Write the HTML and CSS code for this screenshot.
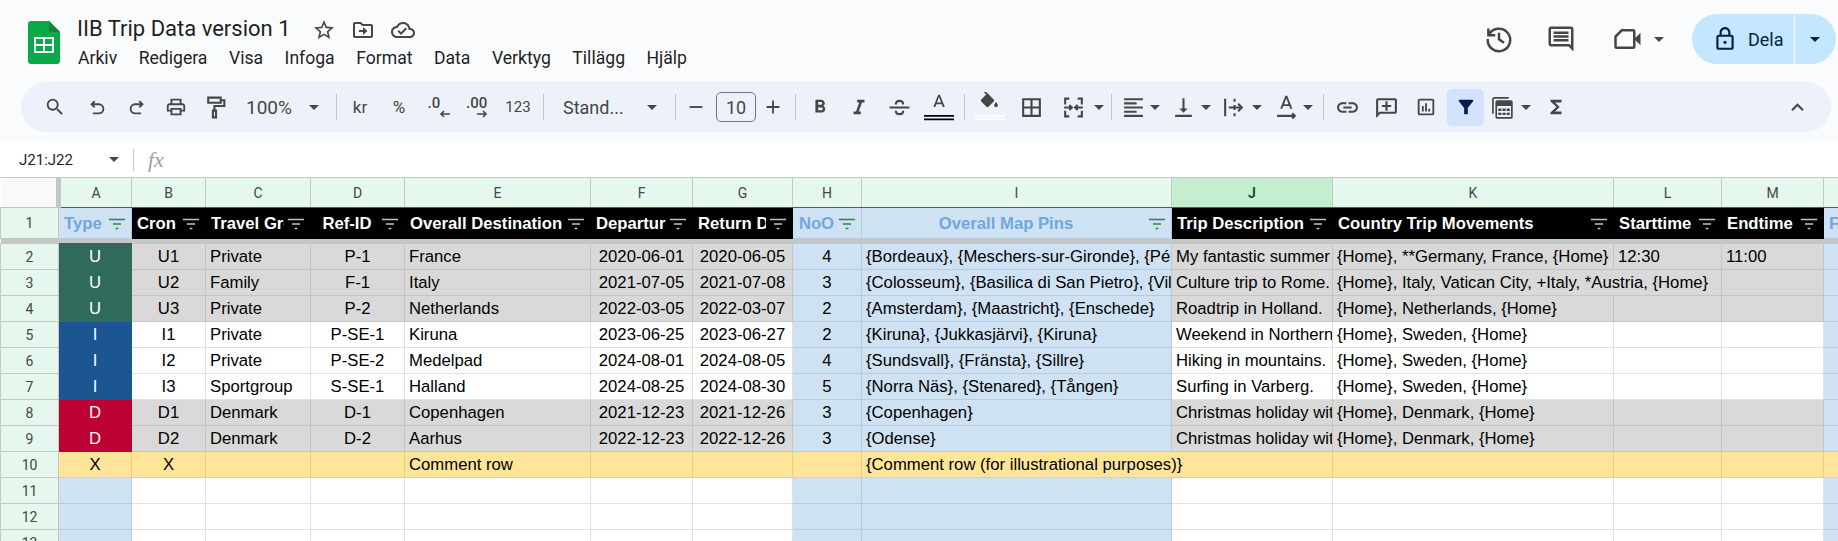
FILE: index.html
```html
<!DOCTYPE html>
<html lang="sv">
<head>
  <meta charset="UTF-8">
  <title>IIB Trip Data version 1</title>
  <link rel="stylesheet" href="styles.css">
</head>
<body>

  <header class="topbar">
    <div class="head">
      <svg class="logo" viewBox="0 0 32 43">
        <path fill="#0ba84a" d="M3 0H21L32 11V40a3 3 0 0 1-3 3H3a3 3 0 0 1-3-3V3a3 3 0 0 1 3-3z"/>
        <path fill="#188038" d="M21 0L32 11H21z"/>
        <path fill="#fff" d="M6 16h20v16H6z"/>
        <path fill="#0ba84a" d="M8 18h7v5H8zM17 18h7v5h-7zM8 25h7v5H8zM17 25h7v5h-7z"/>
      </svg>
      <div class="docinfo">
        <div class="titlerow">
          <span class="title">IIB Trip Data version 1</span>
          <svg class="ico ico-star" viewBox="0 0 24 24"><path d="M22 9.24l-7.19-.62L12 2 9.19 8.63 2 9.24l5.46 4.73L5.82 21 12 17.27 18.18 21l-1.63-7.03L22 9.24zM12 15.4l-3.76 2.27 1-4.28-3.32-2.88 4.38-.38L12 6.1l1.71 4.04 4.38.38-3.32 2.88 1 4.28L12 15.4z"/></svg>
          <svg class="ico ico-folder" viewBox="0 0 24 24"><path d="M20 6h-8l-2-2H4c-1.1 0-2 .9-2 2v12c0 1.1.9 2 2 2h16c1.1 0 2-.9 2-2V8c0-1.1-.9-2-2-2zm0 12H4V6h5.17l2 2H20v10z"/><path d="M12 17l4.5-4L12 9v3H8v2h4z"/></svg>
          <svg class="ico ico-cloud" viewBox="0 0 24 24"><path d="M19.35 10.04C18.67 6.59 15.64 4 12 4 9.11 4 6.6 5.64 5.35 8.04 2.34 8.36 0 10.91 0 14c0 3.31 2.69 6 6 6h13c2.76 0 5-2.24 5-5 0-2.64-2.05-4.78-4.65-4.96zM19 18H6c-2.21 0-4-1.79-4-4 0-2.05 1.53-3.76 3.56-3.97l1.07-.11.5-.95C8.08 7.14 9.94 6 12 6c2.62 0 4.88 1.86 5.39 4.43l.3 1.5 1.53.11c1.56.1 2.78 1.41 2.78 2.96 0 1.65-1.35 3-3 3zm-9-3.82l-2.09-2.09L6.5 13.5 10 17l6.01-6.01-1.41-1.41z"/></svg>
        </div>
        <nav class="menu">
          <span>Arkiv</span><span>Redigera</span><span>Visa</span><span>Infoga</span><span>Format</span><span>Data</span><span>Verktyg</span><span>Tillägg</span><span>Hjälp</span>
        </nav>
      </div>
      <div class="actions">
        <svg class="act-ico ico-hist" viewBox="0 0 24 24"><path class="st" d="M3.5 3.5v5.5H9M3.8 9A9 9 0 1 1 3 12M12 7v5.3l4 2.7"/></svg>
        <svg class="act-ico ico-chat" viewBox="0 0 24 24"><path d="M21.99 4c0-1.1-.89-2-1.99-2H4c-1.1 0-2 .9-2 2v12c0 1.1.9 2 2 2h14l4 4-.01-18zM20 4v13.17L18.83 16H4V4h16zM6 12h12v2H6zm0-3h12v2H6zm0-3h12v2H6z"/></svg>
        <svg class="act-ico ico-video" viewBox="0 0 24 24"><path class="st" d="M7 5H16a1 1 0 0 1 1 1v12a1 1 0 0 1-1 1H3a1 1 0 0 1-1-1V10z"/><path d="M17 12l5-5v10z"/></svg>
        <i class="caret caret-video"></i>
        <div class="share">
          <div class="share-main">
            <svg class="ico-lock" viewBox="0 0 24 24"><path d="M18 8h-1V6c0-2.760-2.240-5-5-5S7 3.240 7 6v2H6c-1.100 0-2 .9-2 2v10c0 1.100.9 2 2 2h12c1.100 0 2-.9 2-2V10c0-1.100-.9-2-2-2zM9 6c0-1.660 1.340-3 3-3s3 1.340 3 3v2H9V6zm9 14H6V10h12v10z"/><circle cx="12" cy="15" r="1.500"/></svg>
            <span>Dela</span>
          </div>
          <div class="share-drop"><i class="caret caret-dark"></i></div>
        </div>
      </div>
    </div>

    <div class="toolbar">
      <div class="t w40"><svg class="i22" viewBox="0 0 24 24"><path d="M15.500 14h-.79l-.28-.27A6.471 6.471 0 0 0 16 9.500 6.500 6.500 0 1 0 9.500 16c1.610 0 3.090-.59 4.230-1.570l.27.28v.79l5 4.990L20.490 19l-4.990-5zm-6 0C7.010 14 5 11.990 5 9.500S7.010 5 9.500 5 14 7.010 14 9.500 11.990 14 9.500 14z"/></svg></div>
      <div class="t w40 ml2"><svg class="i22" viewBox="0 0 24 24"><path class="st" d="M9.500 5.500L6 9l3.500 3.500M6 9h8a5 5 0 0 1 0 10H7.500"/></svg></div>
      <div class="t w40"><svg class="i22" viewBox="0 0 24 24"><path class="st" d="M14.500 5.500L18 9l-3.500 3.500M18 9h-8a5 5 0 0 0 0 10h6.500"/></svg></div>
      <div class="t w38"><svg class="i22" viewBox="0 0 24 24"><path d="M19 8h-1V3H6v5H5c-1.660 0-3 1.340-3 3v6h4v4h12v-4h4v-6c0-1.660-1.340-3-3-3zM8 5h8v3H8V5zm8 12v2H8v-4h8v2zm2-2v-2H6v2H4v-4c0-.55.45-1 1-1h14c.55 0 1 .45 1 1v4h-2z"/></svg></div>
      <div class="t w40"><svg class="i24" viewBox="0 0 24 24"><path class="st" d="M5 2.500h12v5H5zM17 5h3.500v5.500H11V15M9.500 15h3v6.500h-3z"/></svg></div>
      <div class="t w96 tsel"><span class="zoomval">100%</span><i class="caret"></i></div>
      <div class="sep"></div>
      <div class="t w36 ttxt">kr</div>
      <div class="t w42 ttxt">%</div>
      <div class="t w36"><svg class="i30" viewBox="0 0 30 30"><text class="dec" x="4.500" y="16">.0</text><path class="st thin" d="M27 22H18M21 19l-3 3 3 3"/></svg></div>
      <div class="t w42"><svg class="i30" viewBox="0 0 30 30"><text class="dec" x="4" y="16">.00</text><path class="st thin" d="M15 22h9M21 19l3 3-3 3"/></svg></div>
      <div class="t w40 ttxt small">123</div>
      <div class="sep"></div>
      <div class="t w121 tsel tfont"><span class="fontname">Stand...</span><i class="caret"></i></div>
      <div class="sep"></div>
      <div class="t w29"><svg class="i22" viewBox="0 0 24 24"><path d="M5 11h14v2H5z"/></svg></div>
      <div class="t w40 ml6"><span class="sizebox">10</span></div>
      <div class="t w34"><svg class="i22" viewBox="0 0 24 24"><path d="M19 13h-6v6h-2v-6H5v-2h6V5h2v6h6z"/></svg></div>
      <div class="sep"></div>
      <div class="t w38"><svg class="i22" viewBox="0 0 24 24"><path d="M15.600 10.790c.97-.67 1.650-1.770 1.650-2.790 0-2.260-1.750-4-4-4H7v14h7.040c2.090 0 3.710-1.700 3.710-3.790 0-1.520-.86-2.820-2.150-3.420zM10 6.500h3c.83 0 1.500.67 1.500 1.500s-.67 1.500-1.500 1.500h-3v-3zm3.500 9H10v-3h3.500c.83 0 1.500.67 1.500 1.500s-.67 1.500-1.500 1.500z"/></svg></div>
      <div class="t w40"><svg class="i22" viewBox="0 0 24 24"><path d="M10 4v3h2.210l-3.420 10H6v3h8v-3h-2.210l3.420-10H18V4z"/></svg></div>
      <div class="t w40"><svg class="i24" viewBox="0 0 24 24"><path class="st" d="M2.500 12h19M8.500 9c0-4.500 7-4.500 7 0M8.500 15c0 4.500 7 4.500 7 0"/></svg></div>
      <div class="t w40"><svg class="i30 wide" viewBox="0 0 30 30"><path transform="translate(4.500 0) scale(.88)" d="M11 3 5.500 17h2.250l1.120-3h6.250l1.120 3h2.250L13 3h-2zm-1.380 9L12 5.670 14.380 12H9.620z"/><path fill="#000" d="M0 23h30v1.700H0zM0 26.500h30v1.700H0z"/></svg></div>
      <div class="sep"></div>
      <div class="t w40"><svg class="i30 wide" viewBox="0 0 30 30"><path transform="translate(3 -1) scale(.95)" d="M16.560 8.940 7.620 0 6.210 1.410l2.380 2.380-5.150 5.150c-.59.59-.59 1.540 0 2.120l5.500 5.500c.29.29.68.44 1.060.44s.77-.15 1.060-.44l5.500-5.500c.59-.58.59-1.530 0-2.120zM19 11.500s-2 2.170-2 3.500c0 1.100.9 2 2 2s2-.9 2-2c0-1.330-2-3.500-2-3.500z"/><path fill="#fff" d="M0 23h30v1.700H0zM0 26.500h30v1.700H0z"/></svg></div>
      <div class="t w42"><svg class="i24" viewBox="0 0 24 24"><path d="M3 3v18h18V3H3zm8 16H5v-6h6v6zm0-8H5V5h6v6zm8 8h-6v-6h6v6zm0-8h-6V5h6v6z"/></svg></div>
      <div class="t w42"><svg class="i24" viewBox="0 0 24 24"><path class="st" d="M8 3.500H4v5.500M4 11v2M4 15v5.500h4M16 3.500h4v5.500M20 11v2M20 15v5.500h-4M4 12h6M8 9.500l2.500 2.500L8 14.500M20 12h-6M16 9.500L13.500 12l2.500 2.500"/></svg></div>
      <i class="caret"></i>
      <div class="sep ml2"></div>
      <div class="t w33"><svg class="i24" viewBox="0 0 24 24"><path d="M15 15H3v2h12v-2zm0-8H3v2h12V7zM3 13h18v-2H3v2zm0 8h18v-2H3v2zM3 3v2h18V3H3z"/></svg></div>
      <i class="caret"></i>
      <div class="t w35 ml6"><svg class="i24" viewBox="0 0 24 24"><path d="M16 13h-3V3h-2v10H8l4 4 4-4zM4 19v2h16v-2H4z"/></svg></div>
      <i class="caret"></i>
      <div class="t w37 ml4"><svg class="i24" viewBox="0 0 24 24"><path class="st" d="M4 3.500v17M13 3.500v3M13 9.500v5M13 17.500v3M7.500 12H20M16.500 8.500L20 12l-3.500 3.500"/></svg></div>
      <i class="caret"></i>
      <div class="t w34 ml7"><svg class="i24" viewBox="0 0 24 24"><path transform="translate(1 -2) scale(.9)" d="M11 3 5.500 17h2.250l1.120-3h6.250l1.120 3h2.250L13 3h-2zm-1.380 9L12 5.670 14.380 12H9.620z"/><path class="st" d="M3 20h17M17.500 17.500L20 20l-2.500 2.500"/></svg></div>
      <i class="caret"></i>
      <div class="sep ml5"></div>
      <div class="t w36"><svg class="i24" viewBox="0 0 24 24"><path d="M3.900 12c0-1.710 1.390-3.100 3.100-3.100h4V7H7c-2.760 0-5 2.240-5 5s2.240 5 5 5h4v-1.900H7c-1.710 0-3.100-1.390-3.100-3.100zM8 13h8v-2H8v2zm9-6h-4v1.900h4c1.710 0 3.100 1.390 3.100 3.100s-1.390 3.100-3.100 3.100h-4V17h4c2.760 0 5-2.240 5-5s-2.240-5-5-5z"/></svg></div>
      <div class="t w43"><svg class="i24" viewBox="0 0 24 24"><path d="M20 3H4c-1.100 0-2 .9-2 2v17l4-4h14c1.100 0 2-.9 2-2V5c0-1.100-.9-2-2-2zm0 13H5.200L4 17.200V5h16v11z"/><path d="M13 6h-2v3.500H7.500v2H11V15h2v-3.500h3.500v-2H13z"/></svg></div>
      <div class="t w36"><svg class="i22" viewBox="0 0 24 24"><path d="M19 3H5c-1.100 0-2 .9-2 2v14c0 1.100.9 2 2 2h14c1.100 0 2-.9 2-2V5c0-1.100-.9-2-2-2zm0 16H5V5h14v14z"/><path d="M7.500 11h2v6h-2zM11 8h2v9h-2zM14.500 14h2v3h-2z"/></svg></div>
      <div class="t w37 ml3 t-on"><svg class="i22" viewBox="0 0 24 24"><path d="M4.250 5.610C6.270 8.200 10 13 10 13v6c0 .55.45 1 1 1h2c.55 0 1-.45 1-1v-6s3.720-4.800 5.740-7.390A.998.998 0 0 0 18.950 4H5.040c-.83 0-1.300.95-.79 1.610z"/></svg></div>
      <div class="t w37"><svg class="i24" viewBox="0 0 24 24"><path class="st thin" d="M18 2.800H4.500a1.700 1.700 0 0 0-1.700 1.700V18"/><path class="st thin" d="M7 5.800h13a1 1 0 0 1 1 1V21a1 1 0 0 1-1 1H7a1 1 0 0 1-1-1V6.800a1 1 0 0 1 1-1z"/><path d="M6.500 6.500h14v4h-14zM8 13h3v2.300H8zM12 13h3v2.300h-3zM16 13h3v2.300h-3zM8 17h3v2.300H8zM12 17h3v2.300h-3zM16 17h3v2.300h-3z"/></svg></div>
      <i class="caret"></i>
      <div class="t w50"><svg class="i22" viewBox="0 0 24 24"><path d="M18 4H6v2l6.500 6L6 18v2h12v-3h-7l5-5-5-5h7z"/></svg></div>
      <div class="t w40 tright"><svg class="i24" viewBox="0 0 24 24"><path d="M7.410 15.410 12 10.830l4.590 4.580L18 14l-6-6-6 6z"/></svg></div>
    </div>
  </header>

  <div class="formula">
    <span class="namebox">J21:J22</span>
    <i class="caret"></i>
    <div class="fsep"></div>
    <span class="fx">fx</span>
  </div>

  <div class="sheet">
    <table>
      <colgroup>
        <col class="c-rh"><col class="c-a"><col class="c-b"><col class="c-c"><col class="c-d"><col class="c-e"><col class="c-f"><col class="c-g"><col class="c-h"><col class="c-i"><col class="c-j"><col class="c-k"><col class="c-l"><col class="c-m"><col class="c-n">
      </colgroup>
      <thead>
        <tr class="letters">
          <th class="corner"></th><th>A</th><th>B</th><th>C</th><th>D</th><th>E</th><th>F</th><th>G</th><th>H</th><th>I</th><th class="active">J</th><th>K</th><th>L</th><th>M</th><th></th>
        </tr>
      </thead>
      <tbody>
        <tr class="hrow">
          <td class="rh">1</td>
          <td class="hblue"><div class="hc"><span class="hl">Type</span><svg class="fl" viewBox="0 0 20 20"><path d="M1 5h18M5.500 10h9M8.500 15h3"/></svg></div></td>
          <td><div class="hc"><span class="hl">Cron</span><svg class="fl" viewBox="0 0 20 20"><path d="M1 5h18M5.500 10h9M8.500 15h3"/></svg></div></td>
          <td><div class="hc"><span class="hl">Travel Group</span><svg class="fl" viewBox="0 0 20 20"><path d="M1 5h18M5.500 10h9M8.500 15h3"/></svg></div></td>
          <td><div class="hc"><span class="hl mid">Ref-ID</span><svg class="fl" viewBox="0 0 20 20"><path d="M1 5h18M5.500 10h9M8.500 15h3"/></svg></div></td>
          <td><div class="hc"><span class="hl">Overall Destination</span><svg class="fl" viewBox="0 0 20 20"><path d="M1 5h18M5.500 10h9M8.500 15h3"/></svg></div></td>
          <td><div class="hc"><span class="hl">Departure Date</span><svg class="fl" viewBox="0 0 20 20"><path d="M1 5h18M5.500 10h9M8.500 15h3"/></svg></div></td>
          <td><div class="hc"><span class="hl">Return Date</span><svg class="fl" viewBox="0 0 20 20"><path d="M1 5h18M5.500 10h9M8.500 15h3"/></svg></div></td>
          <td class="hblue"><div class="hc"><span class="hl mid">NoO</span><svg class="fl" viewBox="0 0 20 20"><path d="M1 5h18M5.500 10h9M8.500 15h3"/></svg></div></td>
          <td class="hblue"><div class="hc"><span class="hl mid">Overall Map Pins</span><svg class="fl" viewBox="0 0 20 20"><path d="M1 5h18M5.500 10h9M8.500 15h3"/></svg></div></td>
          <td><div class="hc"><span class="hl">Trip Description</span><svg class="fl" viewBox="0 0 20 20"><path d="M1 5h18M5.500 10h9M8.500 15h3"/></svg></div></td>
          <td><div class="hc"><span class="hl">Country Trip Movements</span><svg class="fl" viewBox="0 0 20 20"><path d="M1 5h18M5.500 10h9M8.500 15h3"/></svg></div></td>
          <td><div class="hc"><span class="hl">Starttime</span><svg class="fl" viewBox="0 0 20 20"><path d="M1 5h18M5.500 10h9M8.500 15h3"/></svg></div></td>
          <td><div class="hc"><span class="hl">Endtime</span><svg class="fl" viewBox="0 0 20 20"><path d="M1 5h18M5.500 10h9M8.500 15h3"/></svg></div></td>
          <td class="hblue"><div class="hc"><span class="hl">Flights</span></div></td>
        </tr>
        <tr class="freeze"><td colspan="15"></td></tr>
        <tr class="gray">
          <td class="rh">2</td><td class="ctr tu">U</td><td class="ctr">U1</td><td>Private</td><td class="ctr">P-1</td><td>France</td><td class="ctr">2020-06-01</td><td class="ctr">2020-06-05</td><td class="ctr blue">4</td><td class="blue">{Bordeaux}, {Meschers-sur-Gironde}, {Périgueux}</td><td>My fantastic summer vacation.</td><td>{Home}, **Germany, France, {Home}</td><td>12:30</td><td>11:00</td><td class="blue"></td>
        </tr>
        <tr class="gray">
          <td class="rh">3</td><td class="ctr tu">U</td><td class="ctr">U2</td><td>Family</td><td class="ctr">F-1</td><td>Italy</td><td class="ctr">2021-07-05</td><td class="ctr">2021-07-08</td><td class="ctr blue">3</td><td class="blue">{Colosseum}, {Basilica di San Pietro}, {Villa Borghese}</td><td>Culture trip to Rome.</td><td colspan="2">{Home}, Italy, Vatican City, +Italy, *Austria, {Home}</td><td></td><td class="blue"></td>
        </tr>
        <tr class="gray">
          <td class="rh">4</td><td class="ctr tu">U</td><td class="ctr">U3</td><td>Private</td><td class="ctr">P-2</td><td>Netherlands</td><td class="ctr">2022-03-05</td><td class="ctr">2022-03-07</td><td class="ctr blue">2</td><td class="blue">{Amsterdam}, {Maastricht}, {Enschede}</td><td>Roadtrip in Holland.</td><td>{Home}, Netherlands, {Home}</td><td></td><td></td><td class="blue"></td>
        </tr>
        <tr>
          <td class="rh">5</td><td class="ctr ti">I</td><td class="ctr">I1</td><td>Private</td><td class="ctr">P-SE-1</td><td>Kiruna</td><td class="ctr">2023-06-25</td><td class="ctr">2023-06-27</td><td class="ctr blue">2</td><td class="blue">{Kiruna}, {Jukkasjärvi}, {Kiruna}</td><td>Weekend in Northern Sweden.</td><td>{Home}, Sweden, {Home}</td><td></td><td></td><td class="blue"></td>
        </tr>
        <tr>
          <td class="rh">6</td><td class="ctr ti">I</td><td class="ctr">I2</td><td>Private</td><td class="ctr">P-SE-2</td><td>Medelpad</td><td class="ctr">2024-08-01</td><td class="ctr">2024-08-05</td><td class="ctr blue">4</td><td class="blue">{Sundsvall}, {Fränsta}, {Sillre}</td><td>Hiking in mountains.</td><td>{Home}, Sweden, {Home}</td><td></td><td></td><td class="blue"></td>
        </tr>
        <tr>
          <td class="rh">7</td><td class="ctr ti">I</td><td class="ctr">I3</td><td>Sportgroup</td><td class="ctr">S-SE-1</td><td>Halland</td><td class="ctr">2024-08-25</td><td class="ctr">2024-08-30</td><td class="ctr blue">5</td><td class="blue">{Norra Näs}, {Stenared}, {Tången}</td><td>Surfing in Varberg.</td><td>{Home}, Sweden, {Home}</td><td></td><td></td><td class="blue"></td>
        </tr>
        <tr class="gray">
          <td class="rh">8</td><td class="ctr td-type">D</td><td class="ctr">D1</td><td>Denmark</td><td class="ctr">D-1</td><td>Copenhagen</td><td class="ctr">2021-12-23</td><td class="ctr">2021-12-26</td><td class="ctr blue">3</td><td class="blue">{Copenhagen}</td><td>Christmas holiday with family.</td><td>{Home}, Denmark, {Home}</td><td></td><td></td><td class="blue"></td>
        </tr>
        <tr class="gray">
          <td class="rh">9</td><td class="ctr td-type">D</td><td class="ctr">D2</td><td>Denmark</td><td class="ctr">D-2</td><td>Aarhus</td><td class="ctr">2022-12-23</td><td class="ctr">2022-12-26</td><td class="ctr blue">3</td><td class="blue">{Odense}</td><td>Christmas holiday with family.</td><td>{Home}, Denmark, {Home}</td><td></td><td></td><td class="blue"></td>
        </tr>
        <tr class="yel">
          <td class="rh">10</td><td class="ctr">X</td><td class="ctr">X</td><td></td><td></td><td>Comment row</td><td></td><td></td><td></td><td colspan="2">{Comment row (for illustrational purposes)}</td><td></td><td></td><td></td><td></td>
        </tr>
        <tr><td class="rh">11</td><td class="blue"></td><td></td><td></td><td></td><td></td><td></td><td></td><td class="blue"></td><td class="blue"></td><td></td><td></td><td></td><td></td><td class="blue"></td></tr>
        <tr><td class="rh">12</td><td class="blue"></td><td></td><td></td><td></td><td></td><td></td><td></td><td class="blue"></td><td class="blue"></td><td></td><td></td><td></td><td></td><td class="blue"></td></tr>
        <tr><td class="rh">13</td><td class="blue"></td><td></td><td></td><td></td><td></td><td></td><td></td><td class="blue"></td><td class="blue"></td><td></td><td></td><td></td><td></td><td class="blue"></td></tr>
      </tbody>
    </table>
  </div>

</body>
</html>
```

FILE: styles.css
```css
html, body {
  margin: 0;
  height: 100%;
  overflow: hidden;
}

body {
  display: flex;
  flex-direction: column;
  background-color: #fff;
  font-family: Roboto, "Liberation Sans", sans-serif;
  color: #1f1f1f;
}

svg {
  fill: #444746;
  flex: none;
}

.st {
  fill: none;
  stroke: #444746;
  stroke-width: 2;
}

.st.thin {
  stroke-width: 1.6;
}

.caret {
  display: block;
  flex: none;
  width: 0;
  height: 0;
  border-left: 5px solid transparent;
  border-right: 5px solid transparent;
  border-top: 5px solid #444746;
}

/* top area */
.topbar {
  flex: none;
  height: 142px;
  background-color: #f9fbfd;
}

.head {
  display: flex;
  height: 82px;
  padding-left: 28px;
  box-sizing: border-box;
}

.logo {
  width: 32px;
  height: 43px;
  margin-top: 21px;
}

.docinfo {
  margin-left: 17px;
  padding-top: 14px;
}

.titlerow {
  display: flex;
  align-items: center;
  height: 28px;
}

.title {
  font-size: 22px;
  white-space: nowrap;
  width: 212px;
}

.ico {
  width: 24px;
  height: 24px;
  margin-top: 3px;
}

.ico-star { margin-left: 23px; }
.ico-folder { margin-left: 15px; }
.ico-cloud { margin-left: 16px; }

.menu {
  display: flex;
  gap: 21.500px;
  height: 28px;
  margin-top: 2px;
  padding-left: 1px;
  align-items: center;
  font-size: 17.600px;
  color: #1f1f1f;
}

.actions {
  display: flex;
  align-items: center;
  margin-left: auto;
  height: 50px;
  margin-top: 14px;
  padding-right: 2px;
}

.act-ico {
  width: 30px;
  height: 30px;
}

.ico-hist { margin-right: 32px; }
.ico-chat { margin-right: 37px; }
.caret-video { margin-left: 11.500px; margin-right: 28px; }

.share {
  display: flex;
  width: 144px;
  height: 50px;
  border-radius: 25px;
  overflow: hidden;
  background-color: #c2e7ff;
  color: #041e49;
}

.share-main {
  display: flex;
  align-items: center;
  width: 103px;
  padding-left: 20px;
  box-sizing: border-box;
  border-right: 1px solid #fff;
  font-size: 18px;
  gap: 10px;
}

.ico-lock {
  width: 26px;
  height: 26px;
  fill: #041e49;
}

.share-drop {
  display: flex;
  flex: 1;
  align-items: center;
  justify-content: center;
  padding-right: 2px;
}

.caret-dark {
  border-top-color: #041e49;
}

/* toolbar */
.toolbar {
  display: flex;
  align-items: center;
  height: 50px;
  margin: 0 7px 0 21px;
  padding: 0 14px;
  border-radius: 25px;
  background-color: #edf2fa;
  color: #444746;
}

.t {
  display: flex;
  flex: none;
  align-items: center;
  justify-content: center;
  height: 37px;
}

.w29 { width: 29px; }
.w33 { width: 33px; }
.w34 { width: 34px; }
.w35 { width: 35px; }
.w36 { width: 36px; }
.w37 { width: 37px; }
.w38 { width: 38px; }
.w40 { width: 40px; }
.w42 { width: 42px; }
.w43 { width: 43px; }
.w50 { width: 50px; }
.w96 { width: 96px; }
.w121 { width: 121px; }

.ml2 { margin-left: 2px; }
.ml3 { margin-left: 3px; }
.ml4 { margin-left: 4px; }
.ml5 { margin-left: 5px; }
.ml6 { margin-left: 6px; }
.ml7 { margin-left: 7px; }

.i22 { width: 22px; height: 22px; }
.i24 { width: 25px; height: 25px; }
.i30 { width: 30px; height: 30px; }

.sep {
  flex: none;
  width: 1px;
  height: 26px;
  margin-right: 5px;
  margin-left: 5px;
  background-color: #c7c7c7;
}

.sep.ml2 { margin-left: 7px; }
.sep.ml5 { margin-left: 10px; }

.tsel {
  justify-content: space-between;
  box-sizing: border-box;
  font-size: 18px;
}

.w96.tsel { padding: 0 12px 0 11px; font-size: 19px; }
.tfont { padding: 0 13px 0 14px; }

.ttxt {
  font-size: 17px;
}

.ttxt.small {
  font-size: 15px;
}

.dec {
  font-family: Roboto, sans-serif;
  font-size: 15px;
  font-weight: 500;
  fill: #444746;
}

.sizebox {
  display: block;
  width: 40px;
  height: 30px;
  line-height: 30px;
  border: 1px solid #747775;
  border-radius: 5px;
  box-sizing: border-box;
  text-align: center;
  font-size: 18px;
}

.t-on {
  height: 37px;
  border-radius: 5px;
  background-color: #d3e3fd;
}

.t-on svg {
  fill: #041e49;
}

.tright {
  margin-left: auto;
}

/* formula bar */
.formula {
  display: flex;
  flex: none;
  align-items: center;
  height: 35px;
  padding-left: 19px;
  box-sizing: border-box;
  background-color: #fff;
}

.namebox {
  width: 90px;
  font-size: 15px;
  color: #1f1f1f;
}

.fsep {
  width: 1px;
  height: 22px;
  margin-left: 14px;
  background-color: #c7c7c7;
}

.fx {
  margin-left: 14px;
  font-family: "Liberation Serif", serif;
  font-style: italic;
  font-size: 22px;
  color: #a0a0a0;
}

/* sheet */
.sheet {
  flex: 1;
  overflow: hidden;
  border-top: 1px solid #c4c7c5;
}

table {
  width: 1883px;
  table-layout: fixed;
  border-collapse: collapse;
  font-family: "Liberation Sans", Arial, sans-serif;
  font-size: 16.700px;
  color: #000;
}

.c-rh { width: 58px; }
.c-a { width: 73px; }
.c-b { width: 74px; }
.c-c { width: 105px; }
.c-d { width: 94px; }
.c-e { width: 186px; }
.c-f { width: 102px; }
.c-g { width: 100px; }
.c-h { width: 69px; }
.c-i { width: 310px; }
.c-j { width: 161px; }
.c-k { width: 281px; }
.c-l { width: 108px; }
.c-m { width: 102px; }
.c-n { width: 60px; }

.letters th {
  height: 29px;
  padding: 0;
  border: 1px solid #c4c7c5;
  border-top: 0;
  border-bottom: 1px solid #188038;
  background-color: #e6f7ee;
  font-family: Roboto, sans-serif;
  font-size: 14px;
  font-weight: 400;
  color: #444746;
}

.letters .corner {
  background-color: #f8f9fa;
  border-left: 0;
  border-right: 5px solid #c4c7c5;
  border-bottom-color: #c4c7c5;
}

.letters .active {
  background-color: #c4eecf;
  color: #0b5a2a;
  font-weight: 700;
}

tr {
  height: 26px;
}

td {
  padding: 1px 4px 0;
  border: 1px solid #e1e1e1;
  overflow: hidden;
  white-space: nowrap;
}

.ctr {
  text-align: center;
}

td.rh {
  padding: 0;
  border-color: #c4c7c5;
  background-color: #e6f7ee;
  text-align: center;
  font-family: Roboto, sans-serif;
  font-size: 14px;
  color: #444746;
}

.blue {
  background-color: #cfe2f3;
  border-color: #b8cbdd;
}

.gray td:not(.rh):not(.blue):not(.tu):not(.td-type) {
  background-color: #d9d9d9;
  border-color: #c4c4c4;
}

.yel td:not(.rh) {
  background-color: #ffe599;
  border-color: #e6cf8a;
}

td.tu {
  background-color: #2f6a5c;
  border-color: #2f6a5c;
  color: #fff;
}

td.ti {
  background-color: #1b5592;
  border-color: #1b5592;
  color: #fff;
}

td.td-type {
  background-color: #bd0033;
  border-color: #bd0033;
  color: #fff;
}

.hrow {
  height: 31px;
}

.hrow td:not(.rh) {
  padding: 1px 0 0 5px;
  background-color: #000;
  border-color: #000;
  color: #fff;
  font-weight: 700;
}

.hrow td.hblue {
  background-color: #cfe2f3;
  border-color: #b8cbdd;
  color: #6fa8dc;
}

.hc {
  display: flex;
  align-items: center;
}

.hl {
  flex: 1;
  min-width: 0;
  overflow: hidden;
}

.hl.mid {
  text-align: center;
}

.fl {
  flex: none;
  width: 18px;
  height: 18px;
  margin: 0 5px 0 3px;
  fill: none;
  stroke: #c4c4c4;
  stroke-width: 1.800;
}

.hblue .fl {
  stroke: #1e8e3e;
}

.freeze {
  height: 4px;
}

.freeze td {
  padding: 0;
  height: 4px;
  line-height: 0;
  border: 0;
  background-color: #c4c7c5;
}
```
